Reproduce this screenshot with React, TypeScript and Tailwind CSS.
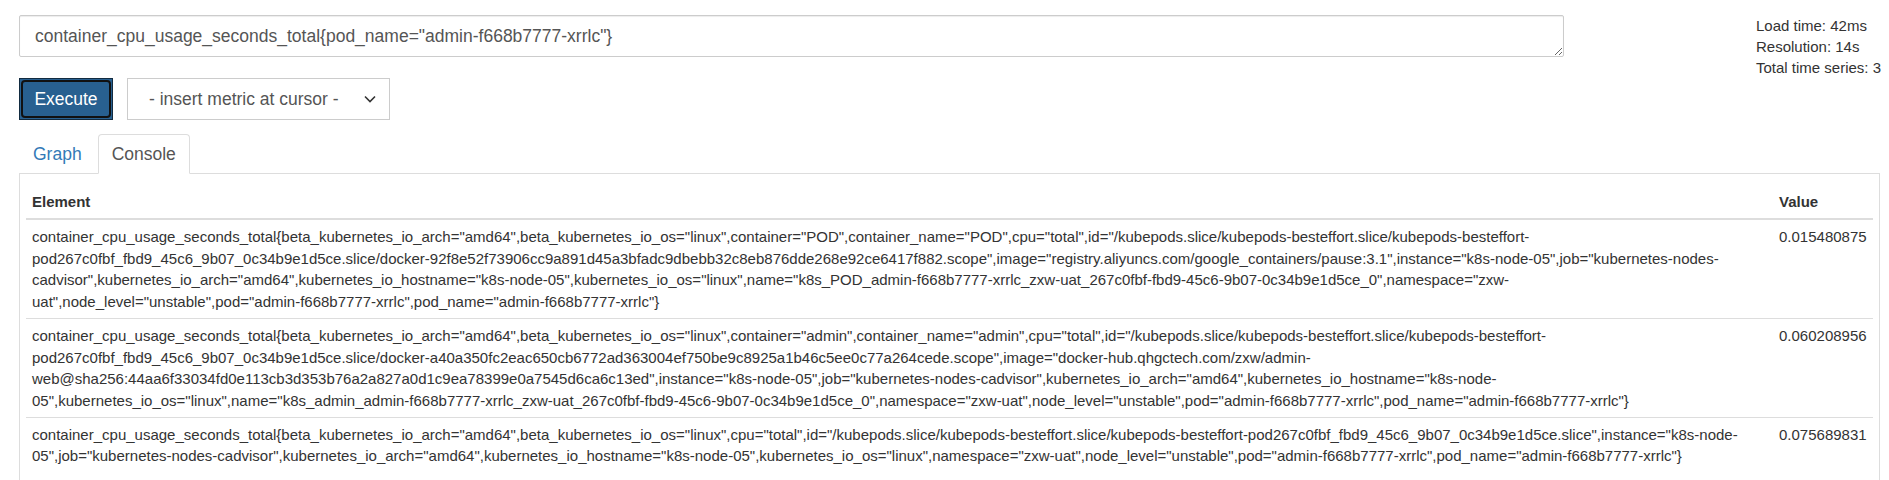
import React from "react";

const query = 'container_cpu_usage_seconds_total{pod_name="admin-f668b7777-xrrlc"}';

// each series is kept on the lines as the console wraps them
const rows = [
  {
    lines: [
      'container_cpu_usage_seconds_total{beta_kubernetes_io_arch="amd64",beta_kubernetes_io_os="linux",container="POD",container_name="POD",cpu="total",id="/kubepods.slice/kubepods-besteffort.slice/kubepods-besteffort-',
      'pod267c0fbf_fbd9_45c6_9b07_0c34b9e1d5ce.slice/docker-92f8e52f73906cc9a891d45a3bfadc9dbebb32c8eb876dde268e92ce6417f882.scope",image="registry.aliyuncs.com/google_containers/pause:3.1",instance="k8s-node-05",job="kubernetes-nodes-',
      'cadvisor",kubernetes_io_arch="amd64",kubernetes_io_hostname="k8s-node-05",kubernetes_io_os="linux",name="k8s_POD_admin-f668b7777-xrrlc_zxw-uat_267c0fbf-fbd9-45c6-9b07-0c34b9e1d5ce_0",namespace="zxw-',
      'uat",node_level="unstable",pod="admin-f668b7777-xrrlc",pod_name="admin-f668b7777-xrrlc"}',
    ],
    value: "0.015480875",
  },
  {
    lines: [
      'container_cpu_usage_seconds_total{beta_kubernetes_io_arch="amd64",beta_kubernetes_io_os="linux",container="admin",container_name="admin",cpu="total",id="/kubepods.slice/kubepods-besteffort.slice/kubepods-besteffort-',
      'pod267c0fbf_fbd9_45c6_9b07_0c34b9e1d5ce.slice/docker-a40a350fc2eac650cb6772ad363004ef750be9c8925a1b46c5ee0c77a264cede.scope",image="docker-hub.qhgctech.com/zxw/admin-',
      'web@sha256:44aa6f33034fd0e113cb3d353b76a2a827a0d1c9ea78399e0a7545d6ca6c13ed",instance="k8s-node-05",job="kubernetes-nodes-cadvisor",kubernetes_io_arch="amd64",kubernetes_io_hostname="k8s-node-',
      '05",kubernetes_io_os="linux",name="k8s_admin_admin-f668b7777-xrrlc_zxw-uat_267c0fbf-fbd9-45c6-9b07-0c34b9e1d5ce_0",namespace="zxw-uat",node_level="unstable",pod="admin-f668b7777-xrrlc",pod_name="admin-f668b7777-xrrlc"}',
    ],
    value: "0.060208956",
  },
  {
    lines: [
      'container_cpu_usage_seconds_total{beta_kubernetes_io_arch="amd64",beta_kubernetes_io_os="linux",cpu="total",id="/kubepods.slice/kubepods-besteffort.slice/kubepods-besteffort-pod267c0fbf_fbd9_45c6_9b07_0c34b9e1d5ce.slice",instance="k8s-node-',
      '05",job="kubernetes-nodes-cadvisor",kubernetes_io_arch="amd64",kubernetes_io_hostname="k8s-node-05",kubernetes_io_os="linux",namespace="zxw-uat",node_level="unstable",pod="admin-f668b7777-xrrlc",pod_name="admin-f668b7777-xrrlc"}',
    ],
    value: "0.075689831",
  },
];

export default function App() {
  return (
    <div className="min-h-screen bg-white pl-[19px] pr-[9px] font-['Liberation_Sans',Arial,sans-serif] text-[#333]">
      <div className="flex">
        <div className="w-[1545px] shrink-0 pt-[15px]">
          <textarea
            readOnly
            defaultValue={query}
            rows={1}
            className="block h-[42px] w-full rounded-[2px] border border-[#ccc] px-[15px] py-[7.5px] text-[17.5px] leading-[25px] text-[#555] shadow-[inset_0_1px_1px_rgba(0,0,0,0.075)] outline-none"
          />

          <div className="mt-[21px] flex gap-[14px]">
            <button className="relative h-[42px] w-[94px] border border-[#122b40] bg-[#286090] text-[17.5px] leading-[25px] text-white">
              <span className="absolute inset-[1px] rounded-[4px] border-2 border-[#111]" />
              Execute
            </button>
            <div className="flex h-[42px] w-[263px] items-center border border-[#ccc] bg-white pl-[21px] pr-[7px] text-[17.5px] leading-[25px] text-[#555]">
              <span className="flex-1">- insert metric at cursor -</span>
              <svg width="12" height="8" viewBox="0 0 12 8" className="mr-[6px]">
                <polyline points="1,1.5 6,6.5 11,1.5" fill="none" stroke="#333" strokeWidth="1.6" />
              </svg>
            </div>
          </div>
        </div>

        <div className="ml-[192px] shrink-0 whitespace-nowrap pt-[15px] text-[15px] leading-[21px] text-[#333]">
          <div>Load time: 42ms</div>
          <div>Resolution: 14s</div>
          <div>Total time series: 3</div>
        </div>
      </div>

      {/* tabs */}
      <ul className="mt-[14px] flex border-b border-[#ddd] text-[17.5px] leading-[25px]">
        <li className="-mb-px mr-[2px]">
          <span className="block border border-transparent px-[13px] py-[6.5px] text-[#337ab7]">Graph</span>
        </li>
        <li className="-mb-px">
          <span className="block rounded-t-[4px] border border-[#ddd] border-b-white bg-white px-[13px] py-[6.5px] text-[#555]">
            Console
          </span>
        </li>
      </ul>

      <div className="border-x border-b border-[#ddd] px-[6px] pt-[11px] pb-[6px]">
        <table className="mb-[25px] w-full table-fixed border-collapse text-[15px] leading-[21.43px] text-[#333]">
          <thead>
            <tr>
              <th className="border-b-2 border-[#ddd] p-[6px] text-left font-bold">Element</th>
              <th className="w-[100px] border-b-2 border-[#ddd] p-[6px] text-left font-bold">Value</th>
            </tr>
          </thead>
          <tbody>
            {rows.map((r) => (
              <tr key={r.value}>
                <td className="border-t border-[#ddd] p-[6px] align-top">
                  {r.lines.map((l, i) => (
                    <div key={i} className="whitespace-nowrap">
                      {l}
                    </div>
                  ))}
                </td>
                <td className="border-t border-[#ddd] p-[6px] align-top">{r.value}</td>
              </tr>
            ))}
          </tbody>
        </table>
      </div>
    </div>
  );
}
